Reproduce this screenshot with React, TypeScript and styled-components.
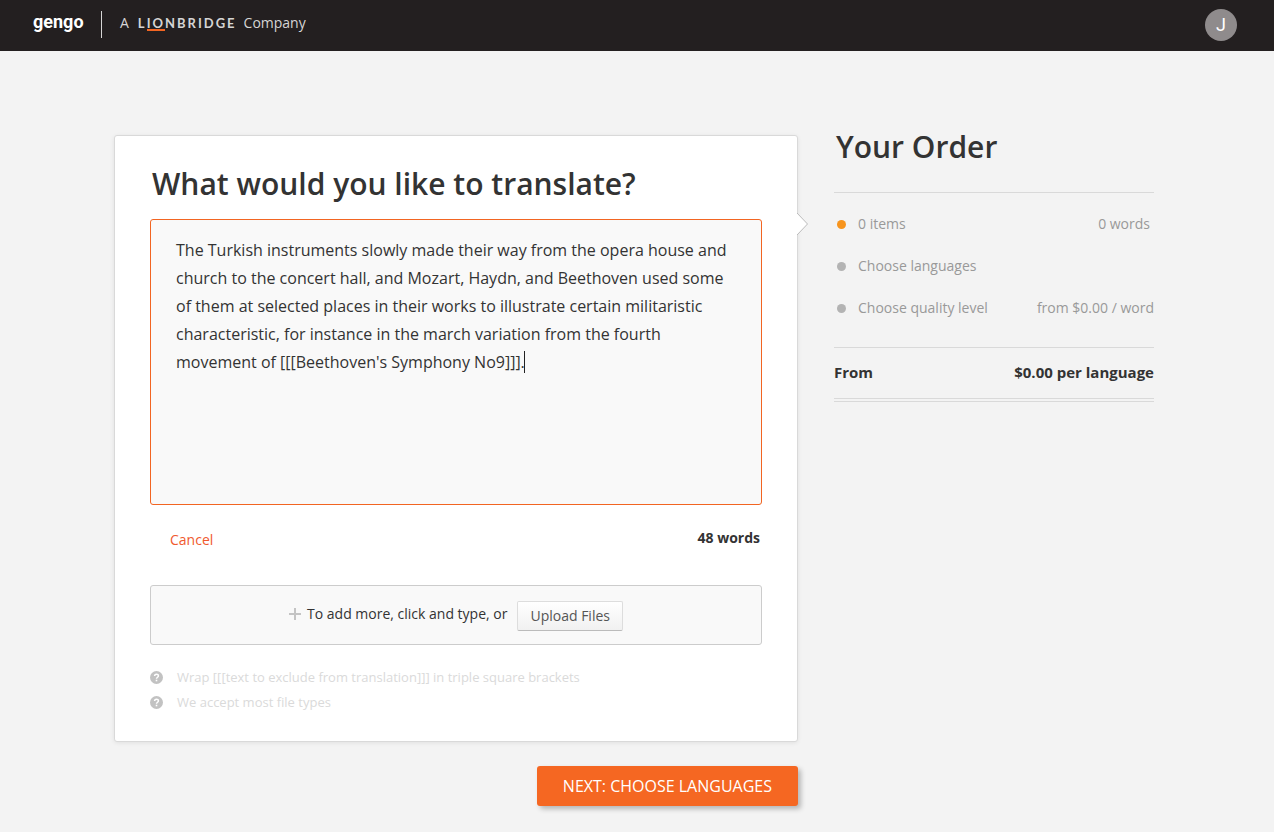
import React, { useState } from "react";
import styled, { createGlobalStyle } from "styled-components";

const GlobalStyle = createGlobalStyle`
  *, *::before, *::after { box-sizing: border-box; }
  body {
    margin: 0;
    background: #f3f3f3;
    color: #333;
    font-family: "Open Sans", "Noto Sans", sans-serif;
    font-size: 14px;
    line-height: 20px;
  }
  button, textarea { font-family: inherit; }
`;

const Header = styled.header`
  display: flex;
  align-items: center;
  justify-content: space-between;
  height: 51px;
  padding: 0 37px 2px 33px;
  background: #231f20;
`;

const Brand = styled.a`
  display: flex;
  align-items: center;
  padding-bottom: 3px;
  color: #d6d5d5;
  text-decoration: none;
  font-size: 14px;
`;

const Gengo = styled.span`
  width: 68px;
  padding-bottom: 2px;
  color: #fff;
  font-family: Roboto, "Liberation Sans", sans-serif;
  font-size: 18px;
  font-weight: 700;
  line-height: 24px;
`;

const BrandRule = styled.span`
  width: 1px;
  height: 27px;
  margin-top: 3px;
  margin-right: 18px;
  background: #d6d5d5;
`;

const Lionbridge = styled.span`
  margin: 0 7px 0 9px;
  font-family: Lato, sans-serif;
  font-size: 13px;
  font-weight: 700;
  letter-spacing: 2px;
`;

const Accent = styled.span`
  display: inline-block;
  border-bottom: 2px solid #f26522;
  line-height: 12px;
`;

const Avatar = styled.button`
  width: 32px;
  height: 32px;
  padding: 0;
  border: 0;
  border-radius: 50%;
  background: #8f8b8c;
  color: #fff;
  font-family: Roboto, sans-serif;
  font-size: 18px;
  line-height: 32px;
`;

const Main = styled.main`
  display: grid;
  grid-template-columns: minmax(0, 1fr) 320px;
  column-gap: 36px;
  align-items: start;
  max-width: 1400px;
  margin: 0 auto;
  padding: 84px 120px 26px 114px;
`;

const Card = styled.section`
  position: relative;
  padding: 28px 35px 29px;
  border: 1px solid #d9d9d9;
  border-radius: 3px;
  background: #fff;
  box-shadow: 0 1px 4px rgba(0, 0, 0, 0.08);
`;

const Pointer = styled.svg`
  position: absolute;
  top: 76px;
  right: -11px;
`;

const Title = styled.h1`
  margin: 0;
  font-size: 30px;
  font-weight: 600;
  line-height: 40px;
`;

const CardTitle = styled(Title)`
  margin: 0 2px 15px;
`;

const Editor = styled.div`
  position: relative;
`;

const SourceText = styled.textarea`
  display: block;
  width: 100%;
  height: 286px;
  padding: 16px 25px;
  border: 1px solid #f26522;
  border-radius: 3px;
  outline: 0;
  resize: none;
  overflow: hidden;
  background: #f9f9f9;
  color: #333;
  caret-color: transparent;
  font-size: 16px;
  line-height: 28px;
`;

const Caret = styled.span`
  position: absolute;
  top: 132px;
  left: 374px;
  width: 1px;
  height: 22px;
  background: #222;
`;

const EditorFooter = styled.div`
  display: flex;
  justify-content: space-between;
  padding: 23px 2px 35px 20px;
`;

const Cancel = styled.button`
  padding: 2px 0 0;
  border: 0;
  background: none;
  color: #f0592f;
  font-size: 14px;
  line-height: 20px;
`;

const WordCount = styled.strong`
  font-weight: 700;
`;

const AddMore = styled.div`
  display: flex;
  align-items: center;
  justify-content: center;
  gap: 10px;
  height: 60px;
  padding-top: 2px;
  border: 1px solid #ccc;
  border-radius: 3px;
  background: #f9f9f9;
`;

const AddLabel = styled.span`
  display: flex;
  align-items: center;
  gap: 6px;
  padding-bottom: 4px;
`;

const UploadButton = styled.button`
  height: 30px;
  padding: 0 12px;
  border: 1px solid #ddd;
  border-bottom-color: #bbb;
  border-radius: 2px;
  background: linear-gradient(#fff, #f1f1f1);
  color: #555;
  font-size: 14px;
  line-height: 28px;
`;

const Hints = styled.ul`
  display: grid;
  row-gap: 5px;
  margin: 22px 0 0;
  padding: 0;
  list-style: none;
  color: #dadada;
  font-size: 13px;
`;

const Hint = styled.li`
  display: flex;
  align-items: center;
  gap: 14px;
`;

const NextRow = styled.div`
  display: flex;
  justify-content: flex-end;
  padding-top: 24px;
`;

const NextButton = styled.button`
  height: 40px;
  padding: 0 26px;
  border: 0;
  border-radius: 3px;
  background: #f56722;
  box-shadow: 3px 3px 5px rgba(0, 0, 0, 0.25);
  color: #fff;
  font-size: 16px;
  text-transform: uppercase;
`;

const Order = styled.aside`
  min-width: 0;
`;

const OrderTitle = styled(Title).attrs({ as: "h2" })`
  margin: -8px 2px 25px;
`;

const Steps = styled.ul`
  display: grid;
  row-gap: 22px;
  margin: 0;
  padding: 21px 0 29px 3px;
  border: solid #d9d9d9;
  border-width: 1px 0;
  list-style: none;
  color: #999;
`;

const Step = styled.li<{ $inset?: boolean }>`
  display: flex;
  align-items: center;
  padding-right: ${(p) => (p.$inset ? 4 : 0)}px;
`;

const Dot = styled.span<{ $active?: boolean }>`
  width: 9px;
  height: 9px;
  margin-right: 12px;
  border-radius: 50%;
  background: ${(p) => (p.$active ? "#f7941d" : "#b3b3b3")};
`;

const StepValue = styled.span`
  margin-left: auto;
`;

const Total = styled.div`
  display: flex;
  justify-content: space-between;
  padding: 14px 0 16px;
  border-bottom: 4px double #d9d9d9;
  font-size: 15px;
  font-weight: 700;
`;

const HelpIcon = () => (
  <svg width="13" height="13" viewBox="0 0 13 13" aria-hidden="true">
    <circle cx="6.5" cy="6.5" r="6.5" fill="#c2c2c2" />
    <path d="M4.6 5.1C4.6 2.6 8.5 2.7 8.4 5C8.3 6.3 6.6 6.2 6.5 7.8" fill="none" stroke="#fff" strokeWidth="1.5" />
    <rect x="5.7" y="8.7" width="1.6" height="1.6" fill="#fff" />
  </svg>
);

const SAMPLE =
  "The Turkish instruments slowly made their way from the opera house and church to the concert hall, and Mozart, Haydn, and Beethoven used some of them at selected places in their works to illustrate certain militaristic characteristic, for instance in the march variation from the fourth movement of [[[Beethoven's Symphony No9]]].";

export default function App() {
  const [text, setText] = useState(SAMPLE);
  return (
    <>
      <GlobalStyle />
      <Header>
        <Brand href="#">
          <Gengo>gengo</Gengo>
          <BrandRule />
          <span>A</span>
          <Lionbridge>
            L<Accent>IO</Accent>NBRIDGE
          </Lionbridge>
          <span>Company</span>
        </Brand>
        <Avatar aria-label="Account J">J</Avatar>
      </Header>
      <Main>
        <div>
          <Card>
            <Pointer width="11" height="24" viewBox="0 0 11 24" aria-hidden="true">
              <path d="M0 1L10.5 12L0 23Z" fill="#fff" />
              <path d="M0 1L10.5 12L0 23" fill="none" stroke="#bbb" />
            </Pointer>
            <CardTitle id="source-title">What would you like to translate?</CardTitle>
            <Editor>
              <SourceText
                aria-labelledby="source-title"
                spellCheck={false}
                value={text}
                onChange={(e) => setText(e.target.value)}
              />
              {text === SAMPLE && <Caret />}
            </Editor>
            <EditorFooter>
              <Cancel onClick={() => setText("")}>Cancel</Cancel>
              <WordCount>48 words</WordCount>
            </EditorFooter>
            <AddMore>
              <AddLabel>
                <svg width="12" height="12" viewBox="0 0 12 12" aria-hidden="true">
                  <path d="M0 6H12M6 0V12" stroke="#c4c4c4" strokeWidth="2" />
                </svg>
                To add more, click and type, or
              </AddLabel>
              <UploadButton>Upload Files</UploadButton>
            </AddMore>
            <Hints>
              <Hint>
                <HelpIcon />
                Wrap [[[text to exclude from translation]]] in triple square brackets
              </Hint>
              <Hint>
                <HelpIcon />
                We accept most file types
              </Hint>
            </Hints>
          </Card>
          <NextRow>
            <NextButton>Next: Choose Languages</NextButton>
          </NextRow>
        </div>
        <Order>
          <OrderTitle>Your Order</OrderTitle>
          <Steps>
            <Step $inset>
              <Dot $active />
              0 items
              <StepValue>0 words</StepValue>
            </Step>
            <Step>
              <Dot />
              Choose languages
            </Step>
            <Step>
              <Dot />
              Choose quality level
              <StepValue>from $0.00 / word</StepValue>
            </Step>
          </Steps>
          <Total>
            <span>From</span>
            <span>$0.00 per language</span>
          </Total>
        </Order>
      </Main>
    </>
  );
}
